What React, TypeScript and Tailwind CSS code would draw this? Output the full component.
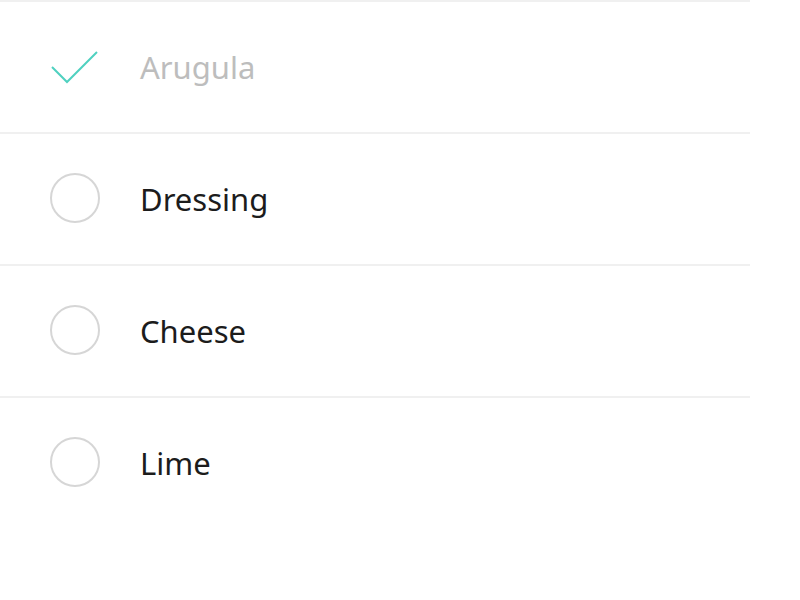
const items = [
  { label: "Arugula", done: true },
  { label: "Dressing", done: false },
  { label: "Cheese", done: false },
  { label: "Lime", done: false },
];

const Check = () => (
  <svg width="50" height="50" viewBox="0 0 50 50" className="block">
    <polyline
      points="2,26 17,41 47,11"
      fill="none"
      stroke="#4fd1c0"
      strokeWidth="2"
    />
  </svg>
);

export default function App() {
  return (
    <div className="w-[800px] h-[600px] bg-white" style={{ fontFamily: "'Noto Sans', sans-serif" }}>
      <ul className="w-[750px]">
        {items.map((item) => (
          <li
            key={item.label}
            className="h-[132px] border-t-2 border-[#f0f0f0] flex items-center"
          >
            <div className="w-[50px] ml-[50px] h-[50px] -mt-[2px] flex items-center justify-center">
              {item.done ? (
                <Check />
              ) : (
                <div className="w-[50px] h-[50px] rounded-full border-2 border-[#d6d6d6]" />
              )}
            </div>
            <span
              className={`ml-[40px] text-[31px] leading-none ${
                item.done ? "text-[#bdbdbd]" : "text-[#1c1c1c]"
              }`}
            >
              {item.label}
            </span>
          </li>
        ))}
      </ul>
    </div>
  );
}
